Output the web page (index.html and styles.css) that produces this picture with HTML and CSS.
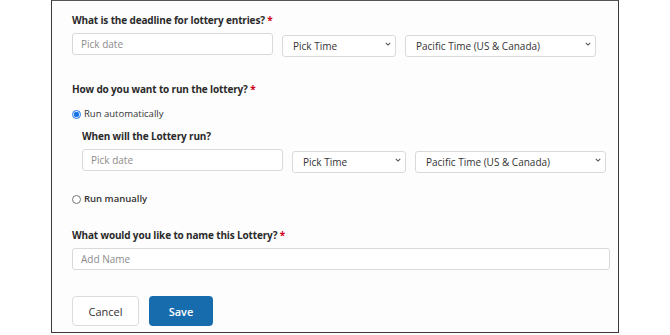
FILE: index.html
```html
<!DOCTYPE html>
<html lang="en">
<head>
  <meta charset="UTF-8" />
  <meta name="viewport" content="width=device-width, initial-scale=1.0" />
  <title>Lottery settings</title>
  <link rel="stylesheet" href="styles.css">
</head>
<body>
  <div class="panel">
    <form class="lottery-form">

      <!-- Deadline -->
      <label class="field-label">What is the deadline for lottery entries? <span class="req">*</span></label>
      <div class="when-row">
        <input type="text" placeholder="Pick date">
        <div class="select">
          <select><option>Pick Time</option></select>
          <svg viewBox="0 0 8 5"><path d="M1 1l3 3 3-3"/></svg>
        </div>
        <div class="select">
          <select><option>Pacific Time (US &amp; Canada)</option></select>
          <svg viewBox="0 0 8 5"><path d="M1 1l3 3 3-3"/></svg>
        </div>
      </div>

      <!-- Run mode -->
      <label class="field-label gap-lg">How do you want to run the lottery? <span class="req">*</span></label>
      <label class="radio"><input type="radio" name="run" checked> Run automatically</label>

      <div class="auto-block">
        <label class="field-label">When will the Lottery run?</label>
        <div class="when-row">
          <input type="text" placeholder="Pick date">
          <div class="select">
            <select><option>Pick Time</option></select>
            <svg viewBox="0 0 8 5"><path d="M1 1l3 3 3-3"/></svg>
          </div>
          <div class="select">
            <select><option>Pacific Time (US &amp; Canada)</option></select>
            <svg viewBox="0 0 8 5"><path d="M1 1l3 3 3-3"/></svg>
          </div>
        </div>
      </div>

      <label class="radio manual"><input type="radio" name="run"> Run manually</label>

      <!-- Name -->
      <label class="field-label name-label">What would you like to name this Lottery? <span class="req">*</span></label>
      <input type="text" class="name-input" placeholder="Add Name">

      <!-- Actions -->
      <div class="actions">
        <button type="button" class="btn cancel">Cancel</button>
        <button type="button" class="btn save">Save</button>
      </div>
    </form>
  </div>
</body>
</html>
```

FILE: styles.css
```css
/* General */
body {
  margin: 0;
  background-color: #ffffff;
  font-family: "Open Sans", Arial, sans-serif;
  color: #2b2b2b;
}

.panel {
  width: 566px;
  height: 331px;
  margin-left: 51px;
  border: 1px solid #3a3a3a;
  border-top-color: #555;
  background-color: #fdfdfd;
}

.lottery-form {
  display: flex;
  flex-direction: column;
  align-items: flex-start;
  width: 538px;
  padding: 12px 0 0 20px;
}

.field-label {
  font-size: 10px;
  line-height: 14px;
  font-weight: 700;
  letter-spacing: -0.15px;
  color: #2a2a2a;
  margin-bottom: 6px;
}

.field-label .req {
  color: #d0021b;
}

.gap-lg {
  margin-top: 25px;
  margin-bottom: 11px;
}

/* Inputs */
.when-row {
  display: grid;
  grid-template-columns: 201px 114px 191px;
  column-gap: 9px;
}

input[type="text"],
select {
  box-sizing: border-box;
  height: 22px;
  padding: 0 8px;
  font-family: inherit;
  font-size: 10px;
  color: #333;
  background-color: #fff;
  border: 1px solid #d9d9d9;
  border-radius: 3px;
  outline: none;
}

input::placeholder {
  color: #8c8c8c;
}

.select {
  position: relative;
}

.select select {
  width: 100%;
  appearance: none;
  -webkit-appearance: none;
  padding-left: 10px;
}

.select svg {
  position: absolute;
  right: 5px;
  top: 9px;
  width: 6px;
  height: 4px;
  fill: none;
  stroke: #555;
  stroke-width: 1.4;
  pointer-events: none;
}

/* Radios */
.radio {
  display: flex;
  align-items: center;
  gap: 3px;
  font-size: 9.5px;
  line-height: 14px;
  color: #333;
}

.radio input {
  width: 9px;
  height: 9px;
  margin: 0;
  accent-color: #1a73e8;
}

.auto-block {
  margin-top: 8px;
  padding-left: 10px;
}

.auto-block .field-label {
  display: block;
  margin-bottom: 6px;
}

.radio.manual {
  margin-top: 19px;
  font-weight: 600;
}

.name-label {
  margin-top: 22px;
  margin-bottom: 6px;
}

.name-input {
  width: 538px;
}

/* Buttons */
.actions {
  display: flex;
  gap: 10px;
  margin-top: 26px;
}

.btn {
  height: 30px;
  padding: 0;
  font-family: inherit;
  font-size: 11px;
  border-radius: 4px;
  cursor: pointer;
}

.btn.cancel {
  width: 67px;
  background-color: #fff;
  color: #333;
  border: 1px solid #dcdcdc;
}

.btn.save {
  width: 64px;
  background-color: #176cae;
  color: #fff;
  font-weight: 600;
  border: none;
}
```
